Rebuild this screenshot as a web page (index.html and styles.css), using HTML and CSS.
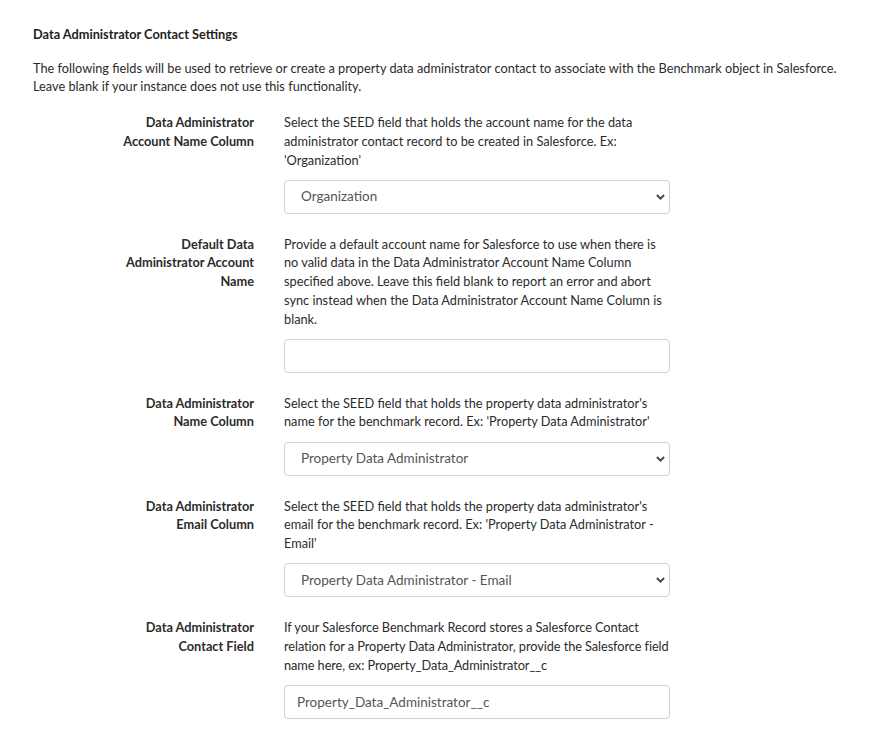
FILE: index.html
```html
<!DOCTYPE html>
<html lang="en">
<head>
<meta charset="utf-8">
<title>Data Administrator Contact Settings</title>
<link rel="stylesheet" href="styles.css">
</head>
<body>
<div class="page">
  <h3 class="title">Data Administrator Contact Settings</h3>
  <p class="intro">The following fields will be used to retrieve or create a property data administrator contact to associate with the Benchmark object in Salesforce. Leave blank if your instance does not use this functionality.</p>

  <div class="form">
    <div class="row">
      <div class="label">Data Administrator Account Name Column</div>
      <div class="field">
        <p class="help">Select the SEED field that holds the account name for the data administrator contact record to be created in Salesforce. Ex: 'Organization'</p>
        <div class="select"><span>Organization</span><svg class="chev" viewBox="0 0 9 6" width="9" height="6"><path d="M0.9 1l3.6 3.6 3.6-3.6" fill="none" stroke="#444" stroke-width="1.9"/></svg></div>
      </div>
    </div>

    <div class="row">
      <div class="label">Default Data Administrator Account Name</div>
      <div class="field">
        <p class="help">Provide a default account name for Salesforce to use when there is no valid data in the Data Administrator Account Name Column specified above. Leave this field blank to report an error and abort sync instead when the Data Administrator Account Name Column is blank.</p>
        <div class="input"></div>
      </div>
    </div>

    <div class="row">
      <div class="label">Data Administrator Name Column</div>
      <div class="field">
        <p class="help">Select the SEED field that holds the property data administrator's name for the benchmark record. Ex: 'Property Data Administrator'</p>
        <div class="select"><span>Property Data Administrator</span><svg class="chev" viewBox="0 0 9 6" width="9" height="6"><path d="M0.9 1l3.6 3.6 3.6-3.6" fill="none" stroke="#444" stroke-width="1.9"/></svg></div>
      </div>
    </div>

    <div class="row">
      <div class="label">Data Administrator Email Column</div>
      <div class="field">
        <p class="help">Select the SEED field that holds the property data administrator's email for the benchmark record. Ex: 'Property Data Administrator - Email'</p>
        <div class="select"><span>Property Data Administrator - Email</span><svg class="chev" viewBox="0 0 9 6" width="9" height="6"><path d="M0.9 1l3.6 3.6 3.6-3.6" fill="none" stroke="#444" stroke-width="1.9"/></svg></div>
      </div>
    </div>

    <div class="row">
      <div class="label">Data Administrator Contact Field</div>
      <div class="field">
        <p class="help help-tight">If your Salesforce Benchmark Record stores a Salesforce Contact relation for a Property Data Administrator, provide the Salesforce field name here, ex: Property_Data_Administrator__c</p>
        <div class="input"><span>Property_Data_Administrator__c</span></div>
      </div>
    </div>
  </div>
</div>
</body>
</html>
```

FILE: styles.css
```css
html, body {
  margin: 0;
  padding: 0;
  background: #fff;
}
body {
  font-family: "Lato", "Liberation Sans", sans-serif;
  font-size: 12.75px;
  line-height: 18.7px;
  color: #2b2b2b;
}
.page {
  padding: 25px 0 0 33px;
  width: 820px;
}
.title {
  margin: 0;
  font-size: 12.75px;
  font-weight: bold;
  color: #222;
}
.intro {
  margin: 15px 0 0;
}
.form {
  margin: 17px 0 0 81px;
  display: flex;
  flex-direction: column;
  gap: 21px;
}
.row {
  display: grid;
  grid-template-columns: 140px 386px;
  column-gap: 30px;
}
.label {
  text-align: right;
  font-weight: bold;
  color: #2b2b2b;
}
.help {
  margin: 0 0 10.5px;
}
.help-tight {
  letter-spacing: -0.07px;
}
.select, .input {
  box-sizing: border-box;
  height: 34px;
  border: 1px solid #d0d0d0;
  border-radius: 4px;
  display: flex;
  align-items: center;
  color: #555;
  font-size: 13.5px;
}
.select {
  padding: 0 4px 0 16px;
  justify-content: space-between;
}
.input {
  margin-top: 2px;
  padding: 0 12px;
}
.chev {
  display: block;
}
```
